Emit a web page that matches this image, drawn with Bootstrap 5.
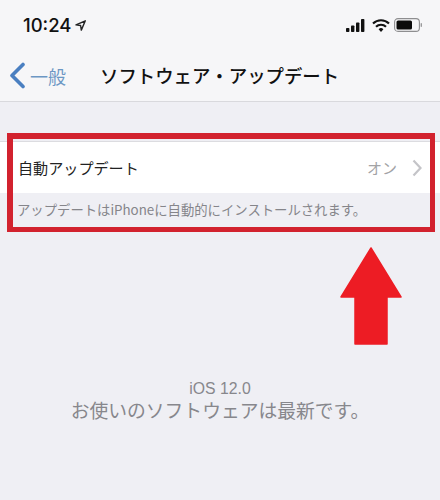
<!DOCTYPE html>
<html lang="ja"><head><meta charset="utf-8">
<link href="https://cdn.jsdelivr.net/npm/bootstrap@5.3.0/dist/css/bootstrap.min.css" rel="stylesheet">
<style>
html,body{margin:0;height:500px;overflow:hidden}
body{background:#efeff4;font-family:"Liberation Sans","Noto Sans CJK JP",sans-serif;width:440px}
.jp{font-family:"Noto Sans CJK JP",sans-serif}
.hdr{height:102px;background:#f6f6f8;border-bottom:1px solid #d9d9dd}
.stat{height:50px;padding:0 17px 0 23px}
.clock{font-family:Inter,"Liberation Sans",sans-serif;font-size:18.500px;font-weight:500;color:#111;line-height:1}
.nv{height:51px;padding-left:9px}
.bk{font-size:18px;color:#6c97c4;margin-left:4px;line-height:1;white-space:nowrap}
.ttl{font-size:18.400px;font-weight:500;color:#111;margin-left:34px;line-height:1;white-space:nowrap}
.sect{margin-top:39px;position:relative;height:91px}
.rw{height:52px;background:#fff;border-top:1px solid #dcdce0;padding:0 18px 0 18px}
.rwt{font-size:15.100px;color:#222;line-height:1}
.rwv{font-size:15px;color:#a3a3a6;line-height:1;margin-right:15px}
.cap{font-size:13.350px;color:#85858a;padding:8px 0 0 17px;line-height:18px;white-space:nowrap}
.frame{position:absolute;left:7px;right:5px;top:-8px;height:99px;border:solid #d2222e;border-width:6px 5px 5px 6px;pointer-events:none}
.arr{height:99px;margin-top:15px;padding-left:340px}
.ver{margin-top:35px;text-align:center;color:#87878c;line-height:1}
.v1{font-size:15.800px;font-family:"Liberation Sans",sans-serif}
.v2{font-size:18.800px;margin-top:4px;white-space:nowrap}
.sig{margin-right:2px}
</style></head><body>
<div class="hdr">
 <div class="stat d-flex align-items-center justify-content-between">
  <div class="d-flex align-items-center gap-1"><span class="clock">10:24</span>
   <svg width="11" height="11" viewBox="0 0 11 11"><path d="M10.300.8 1 4.900l4.600.6.7 4.600z" fill="none" stroke="#222" stroke-width="1.400" stroke-linejoin="round"/></svg></div>
  <div class="d-flex align-items-center gap-1">
   <svg class="sig" width="21" height="13" viewBox="0 0 21 13"><g fill="#111"><rect x="1" y="9" width="3.400" height="4" rx=".8"/><rect x="6" y="6.500" width="3.400" height="6.500" rx=".8"/><rect x="11" y="3.500" width="3.400" height="9.500" rx=".8"/><rect x="16" y="0" width="3.400" height="13" rx=".8"/></g></svg>
   <svg width="18" height="13" viewBox="0 0 18 13"><g fill="none" stroke="#111" stroke-width="2.100"><path d="M1 4.600a11.400 11.400 0 0 1 16 0"/><path d="M4 7.800a7 7 0 0 1 10 0"/></g><path d="M6.600 10.300a3.400 3.400 0 0 1 4.800 0L9 13z" fill="#111"/></svg>
   <svg width="29" height="14" viewBox="0 0 29 14"><rect x=".6" y=".6" width="24.800" height="12.800" rx="3.400" fill="none" stroke="#8e8e90" stroke-width="1.100"/><rect x="2.500" y="2.500" width="15.500" height="9" rx="1.600" fill="#0b0b0b"/><rect x="26.600" y="5" width="1.400" height="4" rx=".7" fill="#9a9a9c"/></svg>
  </div>
 </div>
 <div class="nv d-flex align-items-center">
  <svg width="17" height="27" viewBox="0 0 17 27"><path d="M14 2.500 3 13.500l11 11" fill="none" stroke="#4a7fc1" stroke-width="3.600" stroke-linecap="round" stroke-linejoin="round"/></svg>
  <span class="bk jp">一般</span><span class="ttl jp">ソフトウェア・アップデート</span>
 </div>
</div>
<div class="sect">
 <div class="rw d-flex align-items-center justify-content-between">
  <span class="rwt jp">自動アップデート</span>
  <div class="d-flex align-items-center"><span class="rwv jp">オン</span>
  <svg width="10" height="18" viewBox="0 0 10 18"><path d="M1.500 1.500 8.500 9l-7 7.500" fill="none" stroke="#c4c4c8" stroke-width="2.200"/></svg></div>
 </div>
 <div class="cap jp">アップデートはiPhoneに自動的にインストールされます。</div>
 <div class="frame"></div>
</div>
<div class="arr"><svg width="62" height="99" viewBox="0 0 62 99"><path d="M31 1 61 50H47V97H15V50H1z" fill="#ed1c24" stroke="#ed1c24" stroke-width="1.500" stroke-linejoin="round"/></svg></div>
<div class="ver"><div class="v1">iOS 12.0</div><div class="v2 jp">お使いのソフトウェアは最新です。</div></div>
</body></html>
